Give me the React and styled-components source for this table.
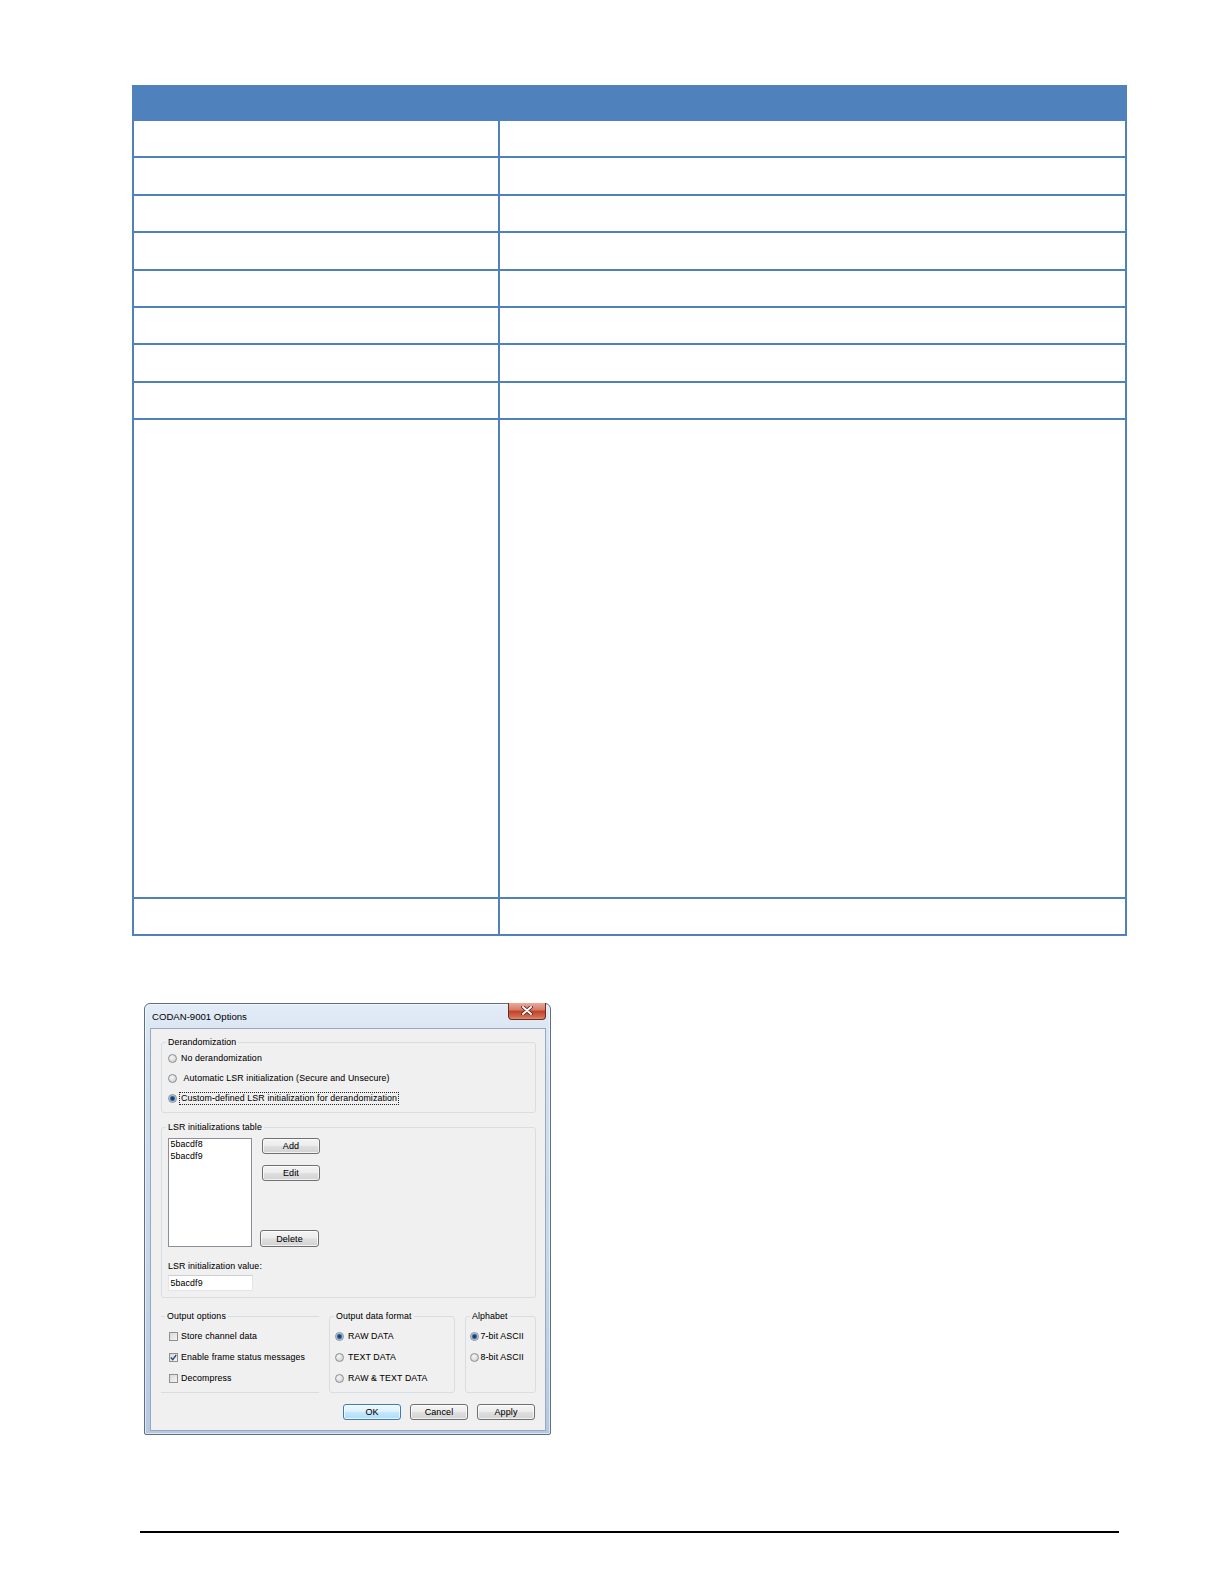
import React from 'react';
import styled, { createGlobalStyle } from 'styled-components';

const GlobalStyle = createGlobalStyle`
  body {
    margin: 0;
    background: #fff;
    font-family: "Liberation Sans", Arial, sans-serif;
  }
`;

const Page = styled.div`
  padding: 85px 0 40px 132px;
`;

const SpecTable = styled.div`
  width: 995px;
  box-sizing: border-box;
  border: 2px solid #4f81bd;
`;

const HeaderRow = styled.div`
  height: 34px;
  background: #4f81bd;
`;

const Row = styled.div`
  display: grid;
  grid-template-columns: 364px 1fr;
  height: ${props => props.$h}px;
  border-bottom: 2px solid #4f81bd;

  &:last-child {
    border-bottom: none;
  }
`;

const Cell = styled.div`
  & + & {
    border-left: 2px solid #4f81bd;
  }
`;

const Rule = styled.div`
  margin: 96px 0 0 8px;
  width: 979px;
  height: 2px;
  background: #000;
`;

// ---- dialog ----

const DialogSpot = styled.div`
  margin: 67px 0 0 12px;
`;

const Window = styled.div`
  width: 407px;
  box-sizing: border-box;
  border: 1px solid #5f6f82;
  border-radius: 6px 6px 2px 2px;
  padding: 0 4px 3px 5px;
  background: linear-gradient(180deg, #e3ecf7 0%, #d3e1f1 12%, #c6d7ec 60%, #b4c8e2 100%);
  box-shadow: inset 0 0 0 1px rgba(255, 255, 255, 0.55);
`;

const TitleBar = styled.div`
  display: flex;
  justify-content: space-between;
  align-items: flex-start;
  height: 24px;
`;

const Title = styled.span`
  padding-left: 2px;
  font-size: 9.6px;
  line-height: 25px;
  color: #000;
`;

const CloseButton = styled.div`
  width: 38px;
  height: 17px;
  margin-top: -1px;
  box-sizing: border-box;
  border: 1px solid #6b2a22;
  border-top: none;
  border-radius: 0 0 4px 4px;
  background: linear-gradient(180deg, #e9a99b 0%, #d67d68 42%, #c2432c 52%, #cf6a4f 85%, #dc8e70 100%);
  display: flex;
  align-items: center;
  justify-content: center;
`;

const Client = styled.div`
  border: 1px solid #97a9bf;
  background: #f0f0f0;
  padding: 8.5px 9px 10px 10px;
  font-size: 8.8px;
  line-height: 11px;
  letter-spacing: 0.12px;
  color: #000;
  -webkit-text-stroke: 0.05px #000;
`;

const Group = styled.fieldset`
  margin: ${props => props.$mt || 0}px 0 0 0;
  padding: 0;
  min-width: 0;
  width: ${props => props.$w ? `${props.$w}px` : 'auto'};
  box-sizing: border-box;
  border: 1px solid #d7dee3;
  border-radius: 3px;
  ${props => props.$open && `
    border-left: none;
    border-right: none;
    border-radius: 0;
  `}
`;

const Legend = styled.legend`
  margin-left: 4px;
  padding: 0 2px;
  font-size: 8.8px;
  line-height: 11px;
`;

const GroupBody = styled.div`
  padding: ${props => props.$pad};
`;

const OptionRow = styled.div`
  display: flex;
  align-items: center;
  height: ${props => props.$h || 20}px;
  gap: ${props => props.$gap || 4}px;
  white-space: nowrap;
`;

const Radio = styled.span`
  flex: none;
  width: 9px;
  height: 9px;
  box-sizing: border-box;
  border-radius: 50%;
  border: 1px solid #8b8d90;
  background: ${props => props.$checked
    ? 'radial-gradient(circle, #123560 0, #1d4a82 1.5px, #5f8fc8 2.6px, #dfe6ee 3.4px)'
    : 'radial-gradient(circle at 40% 35%, #f6f6f6 0, #e2e2e2 45%, #c9c9c9 100%)'};
`;

const Check = styled.span`
  flex: none;
  width: 9px;
  height: 9px;
  box-sizing: border-box;
  border: 1px solid #8e8f8f;
  background: linear-gradient(135deg, #d9d9d9 0%, #f4f4f4 100%);
  display: flex;
  align-items: center;
  justify-content: center;
`;

const Focus = styled.span`
  outline: 1px dotted #222;
  outline-offset: 0;
  padding: 0 1px;
`;

const ListRow = styled.div`
  display: flex;
`;

const ListBox = styled.div`
  width: 84px;
  height: 109px;
  box-sizing: border-box;
  border: 1px solid #8a8f97;
  background: #fff;
  padding: 0 0 0 1.5px;
  line-height: 11.5px;
`;

const ButtonCol = styled.div`
  display: flex;
  flex-direction: column;
  align-items: flex-start;
  margin-left: 10px;
  height: 109px;
`;

const WinButton = styled.button`
  width: ${props => props.$w || 58}px;
  height: ${props => props.$h || 16}px;
  margin: ${props => props.$m || 0};
  padding: 0;
  box-sizing: border-box;
  font-family: "Liberation Sans", Arial, sans-serif;
  font-size: 9px;
  letter-spacing: 0.12px;
  line-height: 12px;
  color: #000;
  -webkit-text-stroke: 0.05px #000;
  border: 1px solid ${props => props.$primary ? '#3d7db3' : '#707070'};
  border-radius: 3px;
  background: ${props => props.$primary
    ? 'linear-gradient(180deg, #eef8fe 0%, #dcf1fc 48%, #c3e8fc 52%, #b0dcf6 100%)'
    : 'linear-gradient(180deg, #f4f4f4 0%, #ececec 48%, #dfdfdf 52%, #d2d2d2 100%)'};
  box-shadow: inset 0 0 0 1px rgba(255, 255, 255, 0.7);
`;

const FieldLabel = styled.div`
  margin-top: 14px;
`;

const TextBox = styled.div`
  margin-top: 3px;
  width: 85px;
  height: 16px;
  box-sizing: border-box;
  border: 1px solid #e2e6ea;
  border-top-color: #cbcfd4;
  background: #fff;
  padding-left: 1.5px;
  line-height: 14px;
`;

const OutputRow = styled.div`
  display: flex;
  gap: 10px;
  margin-top: 12.5px;
`;

const ButtonRow = styled.div`
  display: flex;
  justify-content: flex-end;
  gap: 9px;
  margin: 11px 1px 0 0;
`;

const CloseIcon = () => (
  <svg width="12" height="9" viewBox="0 0 12 9">
    <path d="M2 1 L10 8 M10 1 L2 8" stroke="#5a1b14" strokeWidth="3.6" strokeLinecap="round" />
    <path d="M2 1 L10 8 M10 1 L2 8" stroke="#fff" strokeWidth="2" strokeLinecap="round" />
  </svg>
);

const CheckMark = () => (
  <svg width="7" height="7" viewBox="0 0 7 7">
    <path d="M0.8 3.6 L2.7 5.6 L6.2 1" fill="none" stroke="#2d4d80" strokeWidth="1.4" />
  </svg>
);

const CodanDialog = () => (
  <Window>
    <TitleBar>
      <Title>CODAN-9001 Options</Title>
      <CloseButton><CloseIcon /></CloseButton>
    </TitleBar>
    <Client>
      <Group>
        <Legend>Derandomization</Legend>
        <GroupBody $pad="0 0 3.5px 6px">
          <OptionRow><Radio />No derandomization</OptionRow>
          <OptionRow><Radio />{'\u00a0'}Automatic LSR initialization (Secure and Unsecure)</OptionRow>
          <OptionRow $gap={3}><Radio $checked /><Focus>Custom-defined LSR initialization for derandomization</Focus></OptionRow>
        </GroupBody>
      </Group>

      <Group $mt={9.5}>
        <Legend>LSR initializations table</Legend>
        <GroupBody $pad="5px 0 6px 6px">
          <ListRow>
            <ListBox>
              <div>5bacdf8</div>
              <div>5bacdf9</div>
            </ListBox>
            <ButtonCol>
              <WinButton>Add</WinButton>
              <WinButton $m="11px 0 0 0">Edit</WinButton>
              <WinButton $w={59} $h={17} $m="auto 0 0 -2px">Delete</WinButton>
            </ButtonCol>
          </ListRow>
          <FieldLabel>LSR initialization value:</FieldLabel>
          <TextBox>5bacdf9</TextBox>
        </GroupBody>
      </Group>

      <OutputRow>
        <Group $w={158} $open>
          <Legend>Output options</Legend>
          <GroupBody $pad="4.5px 0 3px 8px">
            <OptionRow $h={21} $gap={3}><Check />Store channel data</OptionRow>
            <OptionRow $h={21} $gap={3}><Check><CheckMark /></Check>Enable frame status messages</OptionRow>
            <OptionRow $h={21} $gap={3}><Check />Decompress</OptionRow>
          </GroupBody>
        </Group>
        <Group $w={126}>
          <Legend>Output data format</Legend>
          <GroupBody $pad="4.5px 0 3px 5px">
            <OptionRow $h={21}><Radio $checked />RAW DATA</OptionRow>
            <OptionRow $h={21}><Radio />TEXT DATA</OptionRow>
            <OptionRow $h={21}><Radio />RAW &amp; TEXT DATA</OptionRow>
          </GroupBody>
        </Group>
        <Group $w={71}>
          <Legend>Alphabet</Legend>
          <GroupBody $pad="4.5px 0 3px 3.5px">
            <OptionRow $h={21} $gap={2}><Radio $checked />7-bit ASCII</OptionRow>
            <OptionRow $h={21} $gap={2}><Radio />8-bit ASCII</OptionRow>
          </GroupBody>
        </Group>
      </OutputRow>

      <ButtonRow>
        <WinButton $primary>OK</WinButton>
        <WinButton>Cancel</WinButton>
        <WinButton>Apply</WinButton>
      </ButtonRow>
    </Client>
  </Window>
);

const rowHeights = [35.4, 35.4, 35.4, 35.4, 35.4, 35.4, 35.4, 35.4, 476.4, 35.2];

export default function App() {
  return (
    <>
      <GlobalStyle />
      <Page>
        <SpecTable>
          <HeaderRow />
          {rowHeights.map((h, i) => (
            <Row key={i} $h={h}>
              <Cell />
              <Cell />
            </Row>
          ))}
        </SpecTable>
        <DialogSpot>
          <CodanDialog />
        </DialogSpot>
        <Rule />
      </Page>
    </>
  );
}
